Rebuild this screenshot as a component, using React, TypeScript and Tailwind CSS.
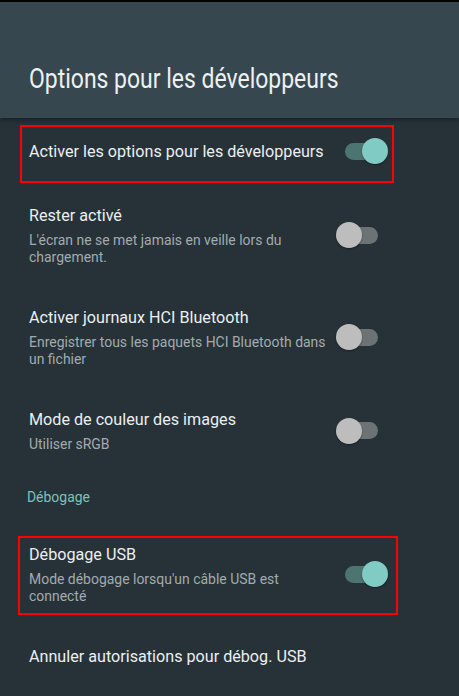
import React from 'react';

type Row = {
  title: string;
  subtitle?: string[];
  toggle?: boolean;
};

function Toggle({ on }: { on: boolean }) {
  return (
    <div className="relative w-[52px] h-[26px] shrink-0">
      <div
        className={`absolute left-[9px] top-[4.5px] w-[33px] h-[17px] rounded-full ${
          on ? 'bg-[#4c7572]' : 'bg-[#6b7374]'
        }`}
      />
      <div
        className={`absolute top-0 w-[26px] h-[26px] rounded-full shadow-[0_1px_2px_rgba(0,0,0,0.35)] ${
          on ? 'right-0 bg-[#80cbc4]' : 'left-0 bg-[#bdbdbd]'
        }`}
      />
    </div>
  );
}

function SettingRow({ row }: { row: Row }) {
  return (
    <div className="relative flex items-center pl-[29px] pr-[71px] py-5">
      <div className="flex-1 min-w-0">
        <div className="text-[17px] leading-[22px] text-[#eceff1] whitespace-nowrap origin-left scale-x-[0.95]">
          {row.title}
        </div>
        {row.subtitle && (
          <div className="mt-[6px] text-[15px] leading-[17px] text-[#a3abae]">
            {row.subtitle.map((line, i) => (
              <div key={i} className="whitespace-nowrap origin-left scale-x-[0.93]">
                {line}
              </div>
            ))}
          </div>
        )}
      </div>
      {row.toggle !== undefined && <Toggle on={row.toggle} />}
    </div>
  );
}

export default function App() {
  const first: Row[] = [
    { title: 'Rester activé', subtitle: ["L'écran ne se met jamais en veille lors du", 'chargement.'], toggle: false },
    {
      title: 'Activer journaux HCI Bluetooth',
      subtitle: ['Enregistrer tous les paquets HCI Bluetooth dans', 'un fichier'],
      toggle: false,
    },
    { title: 'Mode de couleur des images', subtitle: ['Utiliser sRGB'], toggle: false },
  ];

  return (
    <div
      className="w-[459px] h-[696px] overflow-hidden bg-[#263238] border-t-2 border-black"
      style={{ fontFamily: 'Roboto, "Noto Sans", sans-serif' }}
    >
      {/* Header */}
      <div className="relative z-10 h-[116px] bg-[#37474f] pl-[29px] pt-[61px] shadow-[0_2px_4px_rgba(0,0,0,0.35)]">
        <h1 className="text-[28px] leading-[32px] font-normal text-[#eef1f2] whitespace-nowrap origin-left scale-x-[0.82]">
          Options pour les développeurs
        </h1>
      </div>

      <div>
        {/* Enable developer options */}
        <div className="relative">
          <SettingRow row={{ title: 'Activer les options pour les développeurs', toggle: true }} />
          <div className="absolute left-[20px] top-[7px] w-[374px] h-[58px] border-2 border-[#ff0000] pointer-events-none" />
        </div>

        {first.map((row) => (
          <SettingRow key={row.title} row={row} />
        ))}

        {/* Category */}
        <div className="pl-[29px] pt-4 pb-[17px] text-[15px] leading-[17px] text-[#7cc2bb] origin-left scale-x-[0.93]">
          Débogage
        </div>

        <div className="relative">
          <SettingRow
            row={{
              title: 'Débogage USB',
              subtitle: ["Mode débogage lorsqu'un câble USB est", 'connecté'],
              toggle: true,
            }}
          />
          <div className="absolute left-[18px] top-[13px] w-[380px] h-[79px] border-2 border-[#ff0000] pointer-events-none" />
        </div>

        <SettingRow row={{ title: 'Annuler autorisations pour débog. USB' }} />
      </div>
    </div>
  );
}
